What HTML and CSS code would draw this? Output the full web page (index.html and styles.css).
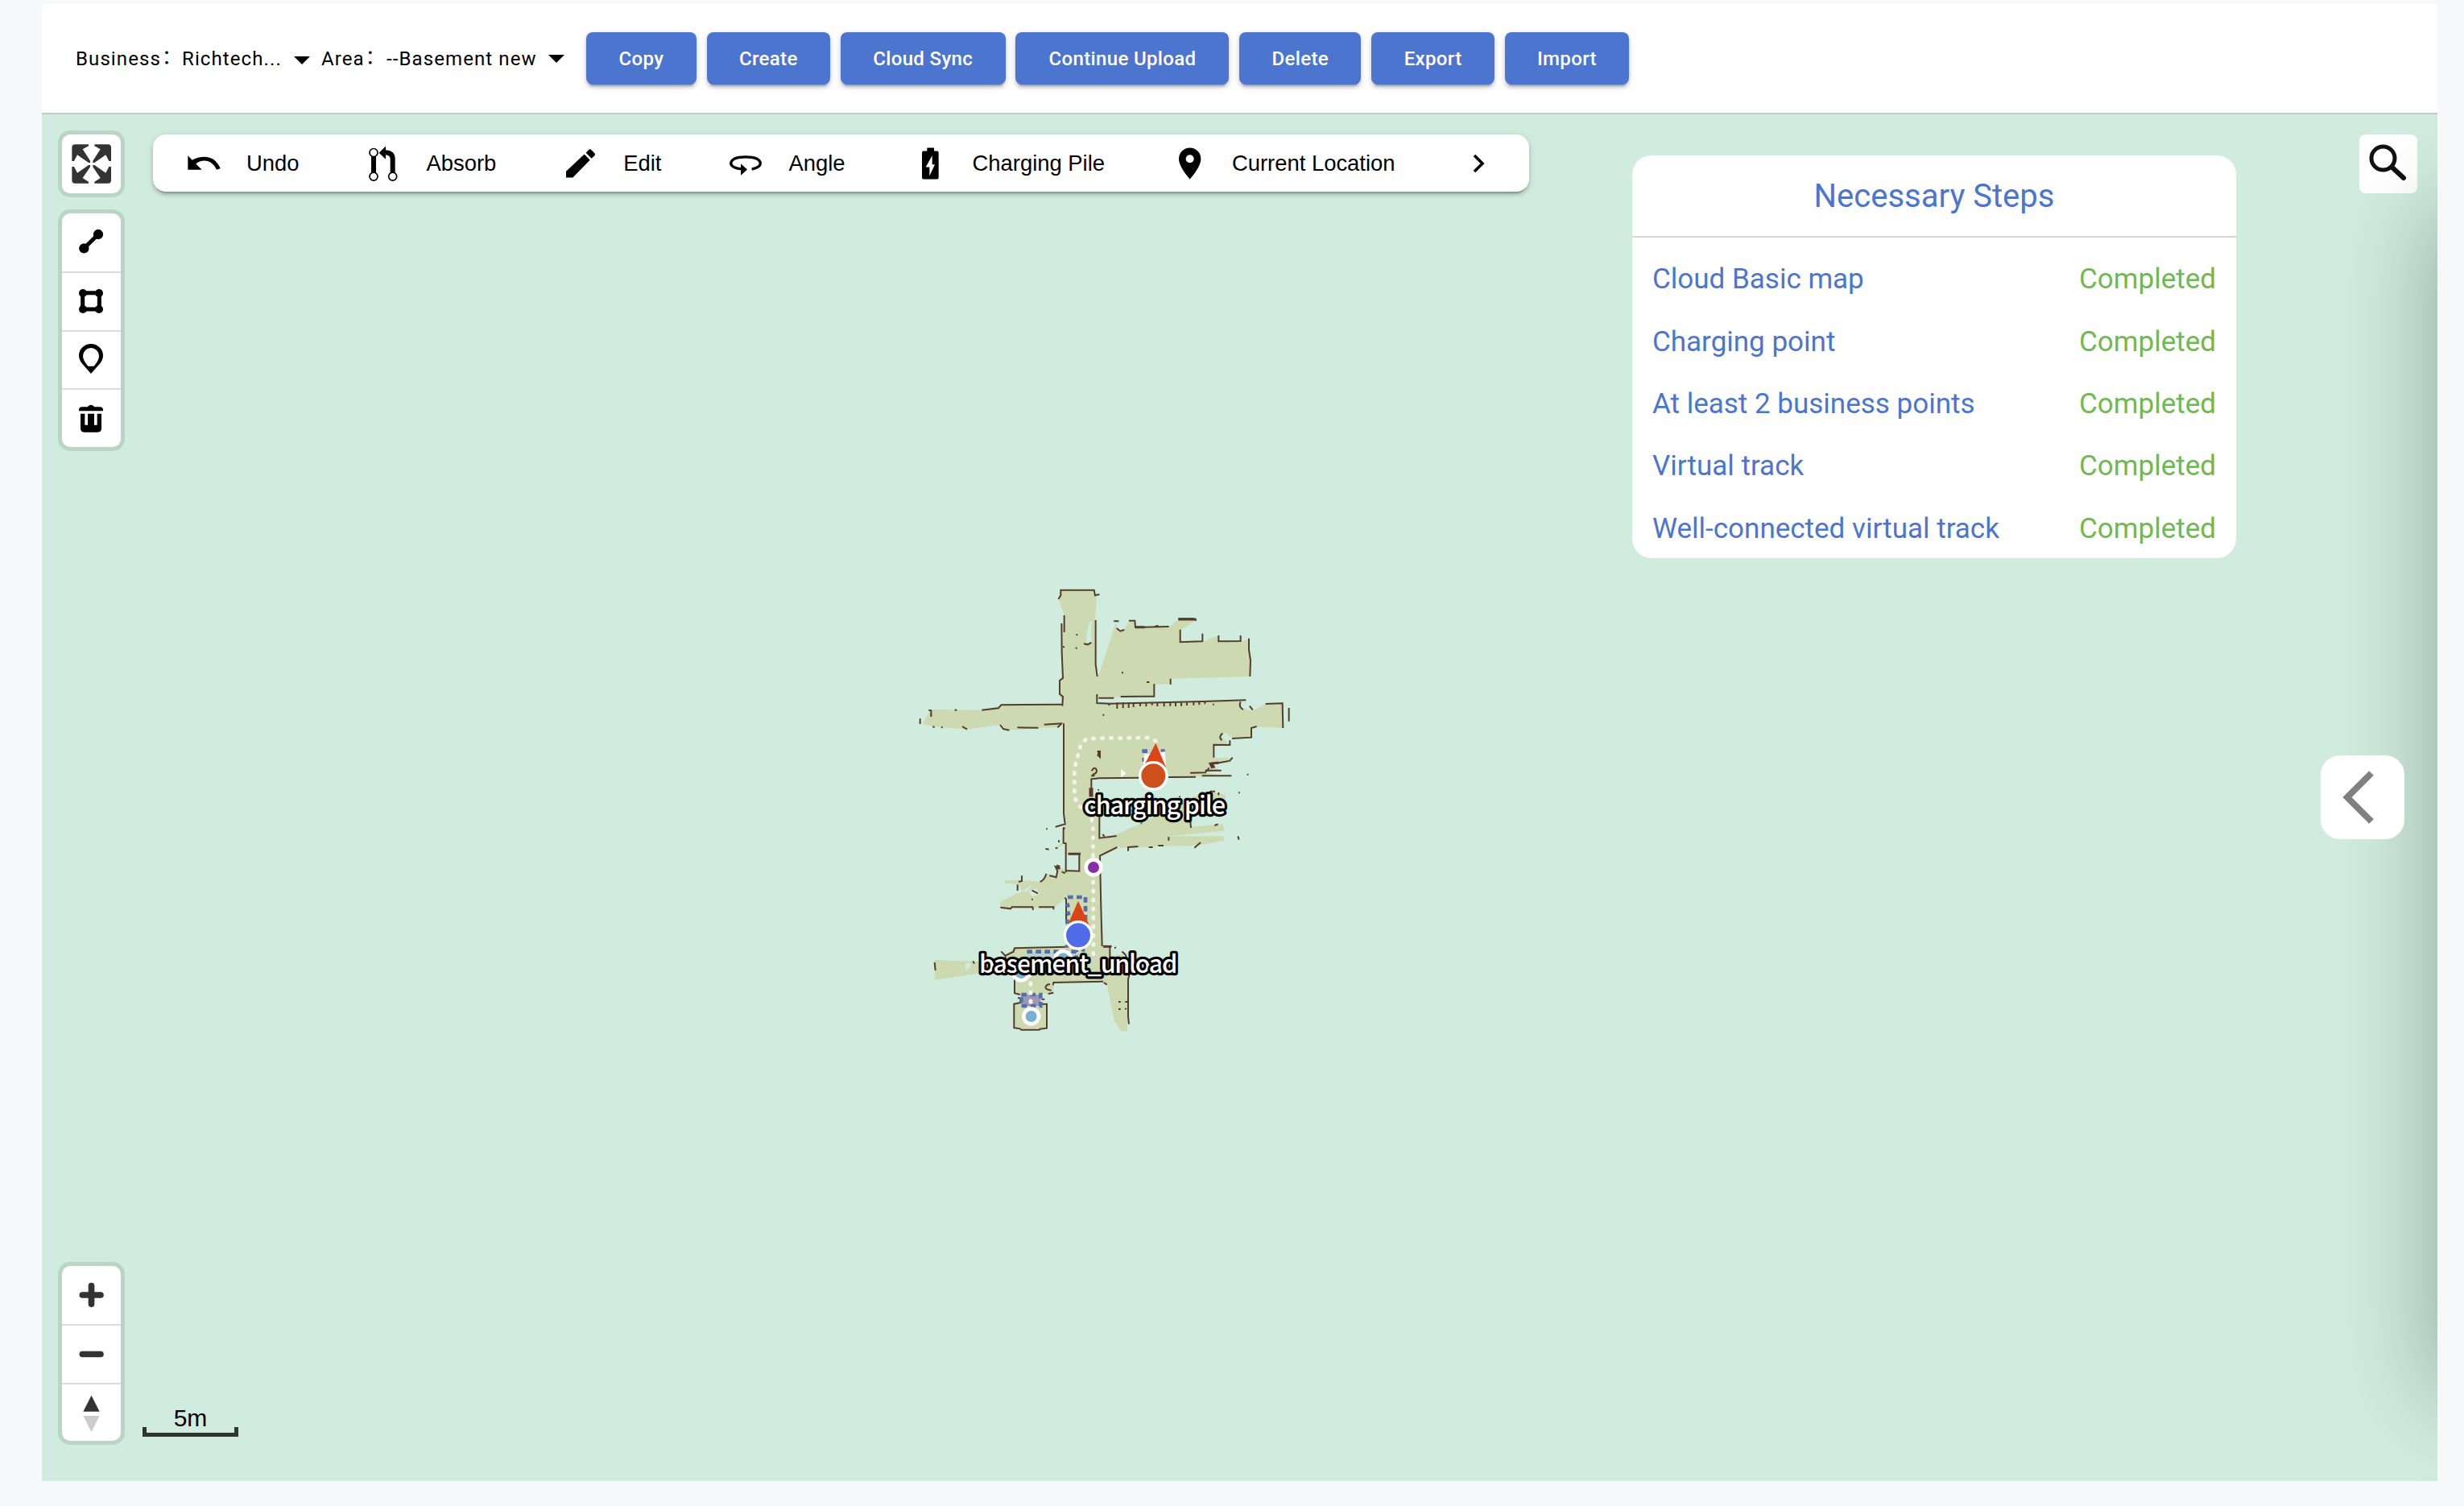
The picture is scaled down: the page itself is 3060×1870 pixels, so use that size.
FILE: index.html
```html
<!DOCTYPE html>
<html lang="en">
<head>
<meta charset="utf-8">
<title>Map editor</title>
<link rel="stylesheet" href="styles.css">
</head>
<body>
<main class="page">
  <header class="header">
    <div class="field field-business"><span class="field-label">Business<span class="colon">：</span></span><span class="field-value">Richtech...</span><i class="caret caret-low"></i></div>
    <div class="field field-area"><span class="field-label">Area<span class="colon">：</span></span><span class="field-value">--Basement new</span><i class="caret"></i></div>
    <nav class="actions">
      <button class="btn w-copy">Copy</button>
      <button class="btn w-create">Create</button>
      <button class="btn w-sync">Cloud Sync</button>
      <button class="btn w-continue">Continue Upload</button>
      <button class="btn w-delete">Delete</button>
      <button class="btn w-export">Export</button>
      <button class="btn w-import">Import</button>
    </nav>
  </header>

  <section class="map">
    <svg class="floorplan" viewBox="0 0 1560 1770">
      <g class="floor">
        <path d="M590 70H716L725 95L720 180L722 390L733 388L797 190L803 212L815 222L828 216L846 183L868 190V208L995 205L1030 178H1100L1040 215V262H1120L1178 238L1184 262L1262 260L1294 250L1298 390L1005 398L1002 418L940 420V465L733 467L727 488L1200 482L1262 484L1268 510L1305 518L1355 492H1420V582L1322 577L1303 582V618L1235 622L1205 600L1190 612L1222 645H1162V692L1230 694L1225 706L1150 720L1190 740L1132 748L1195 758L1075 764L706 770V830L736 838V900L738 993L808 975L893 936L1080 840L1150 820L1205 830V858L1075 910L1075 950L1195 940L1203 965L995 985L1198 985L1200 1002L1100 1020L962 1022L845 1030L802 1026L738 1058L742 1250L745 1395L775 1398L782 1430L825 1425L848 1500L840 1710L818 1713L792 1675L764 1536L750 1528L565 1530V1570L517 1572V1608H541V1700L420 1704V1608L440 1605V1575L420 1573V1505L300 1494L122 1521V1446L370 1455L385 1430L418 1402L612 1398L610 1214L565 1253L370 1252L366 1230L436 1195L468 1188L490 1160L450 1190L432 1165L385 1160V1150L440 1148L515 1155L540 1125L575 1130V1100L590 1100L612 1115L610 1012L570 1034L598 1005L605 950L603 565L585 578L400 590L370 570L240 587L110 575L75 565L110 513L300 515L370 498L598 492L588 460V400L598 390L595 280L605 160L583 100Z"/>
        <path class="void" d="M698 186H706V266L688 262V235Z"/>
        <path class="void" d="M612 1054H661V1112H612Z"/>
        <path class="void" d="M235 1462L255 1455V1472L238 1485ZM470 1190L500 1180L515 1200L488 1210Z"/>
      </g>
      <g class="walls">
        <path d="M583 102L592 88V68H716L720 88L736 84M605 162V225M595 192L596 300L600 396L588 405V455L600 465L598 500M722 180V345L728 390M678 268L692 271L706 264M733 470H790M815 465L885 464H940V418M727 456V489L775 491L1120 483L1190 481L1282 478M790 184H808M800 210L814 221L829 216M846 182H868L870 207L995 204M938 206L955 200M1030 175H1085L1098 180M1037 215V262L1120 259V230M1180 237V259L1262 258V237M1293 248V290L1299 330L1297 390M1001 398V420M912 411H922"/>
        <path d="M768 491L775 497M802 487V510M824 487V508M845 487V507M863 487V504M888 487V501M910 487V502M932 487V497M952 487V501M977 487V502M1000 487V500M1020 487V501M1041 487V500M1062 487V498M1087 485V497M1108 485V496M1129 485V493"/>
        <path d="M598 494L370 496L360 508L298 515M598 565L530 569M596 565L580 580M508 581L430 580M400 590L378 585L366 570M243 587L225 576M100 515L109 517V540M68 547V567M197 514L205 516M147 578L152 581M115 577L122 579M1262 484Q1253 504 1272 513M1296 500L1307 515M1355 492L1418 490L1420 582M1442 507V557M1322 576L1302 582V617L1230 621M1195 602Q1178 614 1192 628M1222 628V645L1162 644V692M1232 692L1222 704L1180 712L1148 715L1165 730L1155 716M1130 740H1190M1228 760H1118M1095 764L993 765M883 767L733 769L724 770L706 772V838M1074 749L1130 748L1145 730M707 742Q719 722 726 740Q726 752 710 755M705 760H718M728 669H738V690L728 680M603 565V900L608 940L572 950M736 905V992L800 984M748 978L755 986M1075 930L1077 954M1147 818H1167M1180 822V832M994 988V1001M1165 945L1178 940M600 953L608 957M602 955V1010L611 1012V1120M620 1051H666M661 1055V1115L612 1113M802 1026L738 1058L742 1250L746 1395M843 1040V1026L880 1023M920 1026H935M955 1020H975M1090 1028L1113 1008M1252 985L1256 998"/>
        <path d="M608 1123L596 1117M590 1105L572 1098L580 1115L575 1138L550 1132M515 1155Q532 1148 538 1125M447 1132V1152L435 1155M431 1165V1188M485 1187L507 1198M367 1250L405 1255L410 1249H487L489 1260M510 1249H565V1258M607 1214L612 1220V1312M612 1397L420 1402L416 1415L385 1430L370 1414M385 1430L388 1445M750 1396H782M775 1398V1435M820 1415Q838 1428 836 1438M848 1500L843 1518V1655L846 1685M750 1526L565 1530L563 1540M752 1530L764 1538M565 1568L545 1572M557 1559Q535 1556 535 1548Q540 1535 552 1537M420 1508V1570L440 1575M432 1588H442M418 1700V1610L445 1604M517 1610H540V1700L515 1703L512 1706H445L440 1702L415 1698M520 1592H532M122 1455L125 1485M265 1450L270 1460M535 1032L548 1034M572 1030L580 1028M585 1008V1000"/>
        <path d="M649 235h6M647 284h6M748 533h6M819 376h6M1286 755h5M1254 823h5M1033 838h5M890 937h5M538 958h5M730 812h5M807 1602h8M807 1629h8M832 1602h8M832 1626l4 4M792 1400h6M790 1440h6M483 1220h5M600 280h6M1158 494h5"/>
        <path class="thick" d="M705 805V838M1152 715L1160 730M575 1098L588 1102"/>
        <path class="medium" d="M1030 177H1096M620 1051H666M870 206H905M1148 715L1180 711M734 671V688M750 1396H780"/>
      </g>
      <path class="zone-light" d="M466 1415H650V1480H466Z"/>
      <path class="zone-dark" d="M445 1575H517V1617H445Z"/>
      <g class="zone-dashes">
        <path d="M618 1212H684V1300M616 1235L620 1250M618 1265L622 1280M616 1295V1310M466 1415H650V1475H466M445 1575H517V1617H445Z"/>
        <path d="M895 668H917M895 700H905M965 668H980M615 1390V1400M670 1408H682"/>
      </g>
      <path class="track" d="M946 630L915 618L690 621L668 640L650 705L643 740V838L657 868L706 913L712 945L714 1450"/>
      <path class="track" d="M475 1500L480 1520V1620"/>
      <path class="arrow-mark" d="M817 736L835 751L817 766Z"/>
      <path class="glow" d="M903 680L980 670L984 720H900Z"/>
      <path class="heading" d="M946 638L902 722L984 728Z"/>
      <circle class="node charging" cx="937" cy="760" r="50"/>
      <circle class="node junction" cx="714" cy="1101" r="28"/>
      <path class="heading" d="M657 1226L616 1320L700 1320Z"/>
      <circle class="node stop" cx="601" cy="1442" r="29"/>
      <circle class="node unload" cx="657" cy="1354" r="50"/>
      <circle class="node stop" cx="444" cy="1493" r="29"/>
      <circle class="node stop" cx="482" cy="1656" r="28"/>
      <text class="label" x="678" y="903" textLength="528">charging pile</text>
      <text class="label" x="288" y="1493" textLength="739">basement_unload</text>
    </svg>

    <div class="left-column">
      <div class="tools">
        <div class="tool"><svg viewBox="81 51 219 219" class="dark"><path d="M118 150V100Q118 88 130 88H180V94L158 106L186 149V156H180L138 127L126 150Z"/><path d="M264 150V100Q264 88 252 88H202V94L224 106L196 149V156H202L244 127L256 150Z"/><path d="M118 171V221Q118 233 130 233H180V227L158 213L186 172V165H180L138 194L126 171Z"/><path d="M264 171V221Q264 233 252 233H202V227L224 213L196 172V165H202L244 194L256 171Z"/></svg></div>
      </div>
      <div class="tools">
        <div class="tool"><svg viewBox="81 345 219 216"><circle cx="216" cy="423" r="18.500"/><circle cx="163" cy="475" r="18.500"/><path d="M163 475L216 423" stroke="#000" stroke-width="15"/></svg></div>
        <div class="tool"><svg viewBox="81 567 219 213"><path d="M158 641H220V702H158Z" fill="none" stroke="#000" stroke-width="15" stroke-linejoin="round"/><circle cx="159" cy="642" r="15"/><circle cx="219" cy="642" r="15"/><circle cx="159" cy="702" r="15"/><circle cx="219" cy="702" r="15"/></svg></div>
        <div class="tool"><svg viewBox="81 786 219 210"><path fill-rule="evenodd" d="M189 942L158 907Q144 890 144 875A45 44 0 0 1 234 875Q234 890 220 907ZM178 914H200Q219 892 219 876A30 30 0 0 0 159 876Q159 892 178 914Z"/></svg></div>
        <div class="tool"><svg viewBox="81 1002 219 213"><path fill-rule="evenodd" d="M144 1081V1076Q145 1066 156 1066H176Q181 1058 189 1058T202 1066H222Q233 1066 234 1076V1081ZM150 1091H228V1146Q228 1160 214 1160H164Q150 1160 150 1146ZM166 1091V1133H177V1091ZM201 1091V1133H212V1091Z"/></svg></div>
      </div>
    </div>

    <div class="toolbar">
      <div class="item"><svg viewBox="477 475.5 144 144"><path d="M490 518L506 535Q526 523 552 523Q592 523 611 566L597 571Q582 537 552 537Q532 537 520 549L542 571H490Z"/></svg>Undo</div>
      <div class="item"><svg viewBox="1146 475.5 144 144"><g fill="none" stroke="#000"><circle cx="1182" cy="507" r="15" stroke-width="5"/><circle cx="1182" cy="596" r="15" stroke-width="5"/><circle cx="1253" cy="596" r="15" stroke-width="5"/><path stroke-width="18" d="M1182 521V582M1253 582V530Q1253 506 1222 506"/></g><path d="M1202 508L1227 483V532Z"/></svg>Absorb</div>
      <div class="item"><svg viewBox="348 475.500 144 144"><path d="M366 577L434 513L455 535L391 600H366ZM440 508L451 496Q455 493 459 496L473 510Q476 514 472 518L461 529Z"/></svg>Edit</div>
      <div class="item"><svg viewBox="963 475.500 144 144"><path d="M1058 569Q1090 562 1090 547Q1087 523 1035 523Q983 523 980 547Q982 564 1020 568" fill="none" stroke="#000" stroke-width="10"/><path d="M1017 548L1041 570L1017 592Z"/></svg>Angle</div>
      <div class="item"><svg viewBox="84 85.500 144 144"><path fill-rule="evenodd" d="M145 99H171V111H182Q188 111 188 117V210Q188 216 182 216H132Q126 216 126 210V117Q126 111 132 111H145ZM164 128L140 171H154V204L174 161H164Z"/></svg>Charging Pile</div>
      <div class="item"><svg viewBox="1050 85.500 144 144"><path fill-rule="evenodd" d="M1124 216Q1083 168 1083 140A41 41 0 0 1 1165 140Q1165 168 1124 216ZM1124 125A15 15 0 1 0 1124 155A15 15 0 1 0 1124 125Z"/></svg>Current Location</div>
      <svg class="next" viewBox="0 0 16 24"><path d="M2 2L12 12L2 22" fill="none" stroke="#000" stroke-width="3.600"/></svg>
    </div>

    <aside class="steps">
      <h2 class="steps-title">Necessary Steps</h2>
      <div class="steps-list">
        <div class="step"><span>Cloud Basic map</span><span class="done">Completed</span></div>
        <div class="step"><span>Charging point</span><span class="done">Completed</span></div>
        <div class="step"><span>At least 2 business points</span><span class="done">Completed</span></div>
        <div class="step"><span>Virtual track</span><span class="done">Completed</span></div>
        <div class="step"><span>Well-connected virtual track</span><span class="done">Completed</span></div>
      </div>
    </aside>

    <button class="search"><svg viewBox="0 0 72 73"><circle cx="29.500" cy="29.500" r="14.500" fill="none" stroke="#111" stroke-width="5"/><path d="M41 41L55 54" stroke="#111" stroke-width="6" stroke-linecap="round"/></svg></button>
    <div class="drawer-shadow"></div>
    <button class="expand"><svg viewBox="0 0 104 104"><path d="M63 22L33 52L63 82" fill="none" stroke="#808080" stroke-width="8"/></svg></button>

    <div class="bottom-left">
      <div class="tools">
        <div class="tool"><svg viewBox="81 66 219 216"><path class="sign" d="M157 174H225M190.500 140V208"/></svg></div>
        <div class="tool"><svg viewBox="81 288 219 213"><path class="sign" d="M157 394.500H225"/></svg></div>
        <div class="tool"><svg viewBox="81 507 219 210"><path d="M190.500 548L221 608H160Z" fill="#333"/><path d="M190.500 684L221 624H160Z" fill="#ccc"/></svg></div>
      </div>
      <div class="scale"><span>5m</span></div>
    </div>
  </section>
</main>
</body>
</html>
```
FILE: styles.css
```css
* { box-sizing: border-box; }

body {
  margin: 0;
  background: #f7f8fa;
  color: #000;
  font-family: Roboto, "Noto Sans CJK SC", sans-serif;
}

button { font: inherit; border: 0; padding: 0; }
svg { display: block; }

.page {
  width: 2975px;
  height: 1834px;
  margin: 5px 0 0 52px;
  display: flex;
  flex-direction: column;
}

/* Header */
.header {
  height: 137px;
  flex: none;
  padding: 35px 0 0 42px;
  display: flex;
  align-items: flex-start;
  background: #fff;
  border-bottom: 2px solid #c8c8c8;
}

.field {
  height: 65px;
  display: flex;
  align-items: center;
  font-size: 24px;
  letter-spacing: 1.100px;
  line-height: 30px;
  white-space: nowrap;
}
.field-business { width: 305px; }
.field-area { width: 329px; }
.field-business .field-label { width: 132px; }
.field-business .field-value { width: 139px; }
.field-area .field-label { width: 81px; }
.field-area .field-value { width: 201px; }
.colon { position: relative; left: 1px; top: -2px; line-height: 1; }

.caret {
  border: 10px solid transparent;
  border-top-color: #000;
  border-bottom: 0;
}
.caret-low { margin-top: 5px; }

.actions { display: flex; gap: 12.830px; }
.btn {
  height: 65px;
  border-radius: 8px;
  background: #4c75cf;
  color: #fff;
  font-size: 24px;
  font-weight: 500;
  letter-spacing: .350px;
  white-space: nowrap;
  box-shadow: 0 6px 2px -4px rgba(0, 0, 0, .2), 0 4px 4px rgba(0, 0, 0, .14), 0 2px 10px rgba(0, 0, 0, .12);
}
.w-copy { width: 137px; }
.w-create { width: 153px; }
.w-sync { width: 205px; }
.w-continue { width: 265px; }
.w-delete { width: 151px; }
.w-export { width: 153px; }
.w-import { width: 154px; }

/* Map canvas, with controls floating over it */
.map {
  position: relative;
  flex: 1;
  overflow: hidden;
  background: #cfecde;
}

.floorplan {
  position: absolute;
  left: 1068px;
  top: 568px;
  width: 520px;
  height: 590px;
}
.floor { fill: #cdd9b0; }
.void { fill: #cfecde; }
.walls { fill: none; stroke: #543d2c; stroke-width: 6; }
.medium { stroke-width: 9; }
.thick { stroke-width: 15; }
.zone-light { fill: #b9cfd6; }
.zone-dark { fill: #9c98b4; }
.zone-dashes { fill: none; stroke: #566eaa; stroke-width: 14; stroke-dasharray: 20 13; }
.track {
  fill: none;
  stroke: #f2f3e6;
  stroke-width: 15;
  stroke-linecap: round;
  stroke-dasharray: 4 29.200;
}
.arrow-mark, .glow { fill: #fff; }
.heading { fill: #db4516; }
.node { stroke: #fff; stroke-width: 10; }
.charging { fill: #cd4f1c; }
.unload { fill: #4f6be8; }
.node.junction { fill: #882ea8; stroke-width: 14; }
.node.stop { fill: #77b0d2; stroke-width: 14; }
.label {
  fill: #fff;
  stroke: #000;
  stroke-width: 19;
  stroke-linejoin: round;
  paint-order: stroke;
  font: 500 92px "Noto Sans CJK SC", sans-serif;
}

.left-column {
  position: absolute;
  left: 20px;
  top: 20px;
  display: flex;
  flex-direction: column;
  gap: 15px;
}
.tools {
  width: 83px;
  border: 5px solid #bad5c8;
  border-radius: 15px;
  background: #bad5c8;
}
.tool { background: #fff; border-bottom: 2px solid #dcdcdc; }
.tool:first-child { border-radius: 10px 10px 0 0; }
.tool:last-child { border-bottom: 0; border-radius: 0 0 10px 10px; }
.tool:only-child { border-radius: 10px; }
.tool svg { width: 73px; }
.dark { fill: #333; }
.sign { fill: none; stroke: #333; stroke-width: 23; stroke-linecap: round; }

.toolbar {
  position: absolute;
  left: 138px;
  top: 25px;
  width: 1709px;
  height: 71px;
  padding-left: 39px;
  display: flex;
  align-items: center;
  gap: 81px;
  border-radius: 16px;
  background: #fff;
  font: 27.400px "Liberation Sans", Arial, sans-serif;
  white-space: nowrap;
  box-shadow: 0 6px 2px -4px rgba(0, 0, 0, .2), 0 4px 4px rgba(0, 0, 0, .14), 0 2px 10px rgba(0, 0, 0, .12);
}
.item { display: flex; align-items: center; gap: 29px; }
.item svg { width: 48px; height: 48px; }
.next { width: 16px; height: 24px; margin-left: 15px; }

.steps {
  position: absolute;
  left: 1975px;
  top: 51px;
  width: 750px;
  height: 500px;
  border-radius: 24px;
  background: #fff;
  color: #4c75cf;
}
.steps-title {
  height: 102px;
  margin: 0;
  border-bottom: 2px solid #d6d6d6;
  font-size: 40px;
  font-weight: 400;
  line-height: 101px;
  text-align: center;
}
.steps-list { padding: 13px 25px 0; }
.step {
  height: 77.400px;
  display: flex;
  align-items: center;
  justify-content: space-between;
  font-size: 35px;
}
.done { color: #70b850; }

.search {
  position: absolute;
  left: 2878px;
  top: 25px;
  width: 72px;
  height: 73px;
  border-radius: 8px;
  background: #fff;
}
.drawer-shadow {
  position: absolute;
  left: 2975px;
  top: 120px;
  width: 400px;
  height: 1466px;
  box-shadow: 0 0 112px rgba(0, 0, 0, .3);
}
.expand {
  position: absolute;
  left: 2830px;
  top: 796px;
  width: 104px;
  height: 104px;
  border-radius: 24px;
  background: #fff;
}

.bottom-left {
  position: absolute;
  left: 20px;
  bottom: 45px;
  display: flex;
  align-items: flex-end;
  gap: 22px;
}
.scale {
  width: 119px;
  height: 12px;
  margin-bottom: 10px;
  border: 5px solid #333;
  border-top: 0;
  display: flex;
  align-items: flex-end;
  justify-content: center;
  font: 30px "Liberation Sans", Arial, sans-serif;
}
.scale span { line-height: 36px; }
```
